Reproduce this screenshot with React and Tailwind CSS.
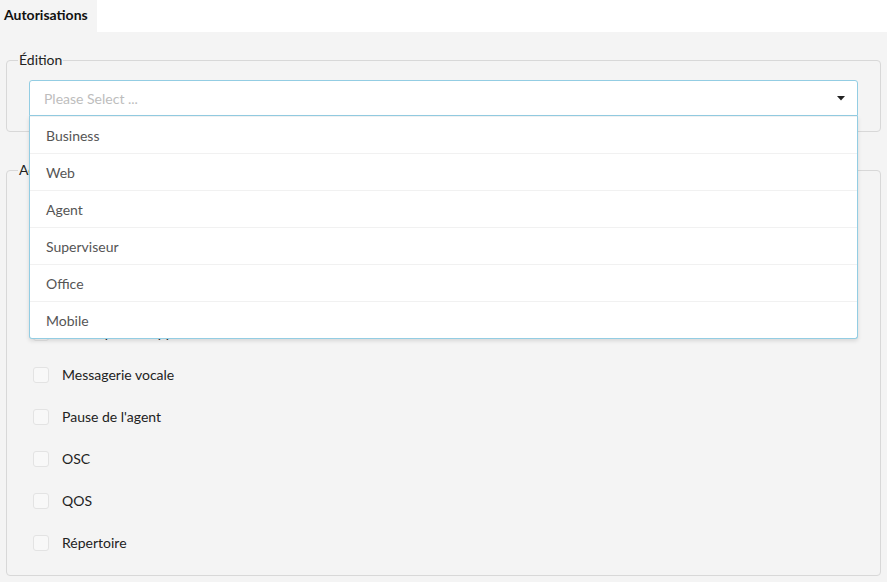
import { useState } from "react";

const EDITIONS = ["Business", "Web", "Agent", "Superviseur", "Office", "Mobile"];

const PERMISSIONS = [
  "Enregistrement des appels",
  "Écoute discrète",
  "Transfert d'appel",
  "Interception d'appel en attente",
  "Messagerie vocale",
  "Pause de l'agent",
  "OSC",
  "QOS",
  "Répertoire",
];

export default function App() {
  const [open] = useState(true);
  const [checked, setChecked] = useState({});

  return (
    <div
      className="flex min-h-[582px] w-full flex-col bg-[#f4f4f4] text-[14px] text-[#222]"
      style={{ fontFamily: "Lato, 'Open Sans', sans-serif" }}
    >
      {/* tab strip */}
      <div className="flex h-[32px] bg-white">
        <div className="flex w-[97px] items-center bg-[#f4f4f4] px-[4px] pb-[4px] font-bold text-[#111]">
          Autorisations
        </div>
      </div>

      <div className="flex flex-col gap-[29px] px-[6px] pt-[19px]">
        <fieldset className="rounded-[4px] border border-[#d8d8d8] px-0 pt-[11px] pb-[15px]">
          <legend className="ml-[11px] px-[1px] leading-[18px]">Édition</legend>
          <div className="relative mx-[22px]">
            <div className="flex h-[36px] items-center justify-between rounded-t-[3px] border border-[#93cde3] bg-white pl-[14px] pr-[12px] text-[#bdbdbd]">
              <span>Please Select ...</span>
              <Caret />
            </div>
            {open && (
              <ul className="absolute left-0 right-0 top-full z-10 rounded-b-[3px] border border-t-0 border-[#93cde3] bg-white shadow-[0_2px_4px_rgba(0,0,0,0.12)]">
                {EDITIONS.map((e) => (
                  <li
                    key={e}
                    className="flex h-[37px] items-center border-t border-[#f1f1f1] pl-[16px] text-[#555]"
                  >
                    {e}
                  </li>
                ))}
              </ul>
            )}
          </div>
        </fieldset>

        <fieldset className="rounded-[4px] border border-[#d8d8d8] px-0 pt-[7px] pb-[11px]">
          <legend className="ml-[11px] px-[1px] leading-[18px]">Accès</legend>
          <div className="flex flex-col px-[26px]">
            {PERMISSIONS.map((p) => (
              <label key={p} className="flex h-[42px] items-center gap-[13px]">
                <span
                  onClick={() => setChecked((c) => ({ ...c, [p]: !c[p] }))}
                  className={
                    "h-[16px] w-[16px] rounded-[3px] border border-[#e3e3e3] " +
                    (checked[p] ? "bg-[#93cde3]" : "bg-[#f8f8f8]")
                  }
                />
                <span className="pb-[1px]">{p}</span>
              </label>
            ))}
          </div>
        </fieldset>
      </div>
    </div>
  );
}

function Caret() {
  return (
    <svg width="8" height="5" viewBox="0 0 8 5">
      <path d="M0 0h8L4 4.5Z" fill="#222" />
    </svg>
  );
}
